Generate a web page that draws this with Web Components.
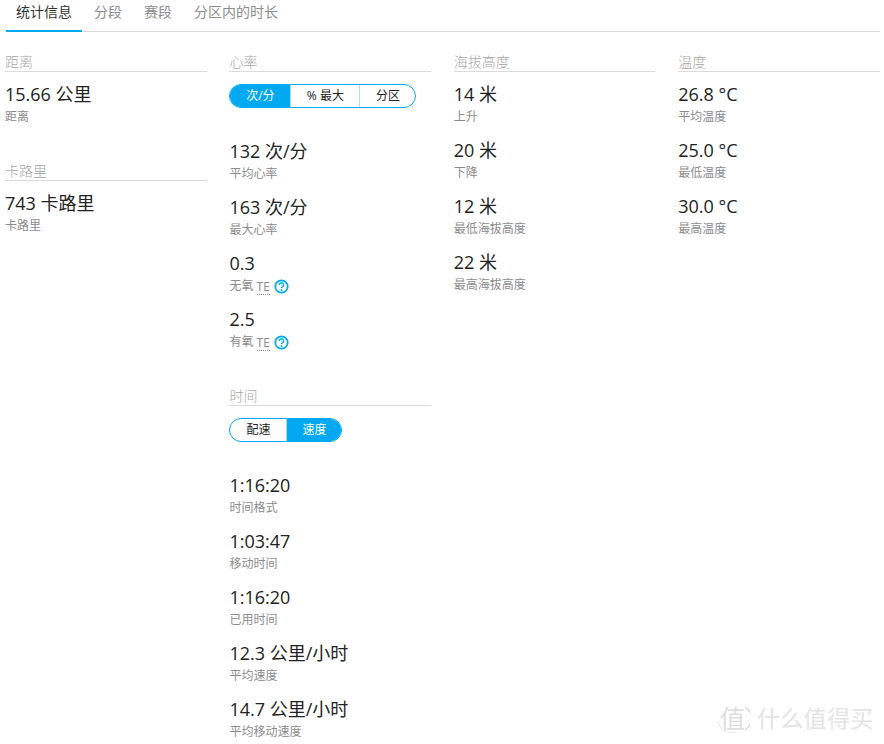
<!DOCTYPE html>
<html lang="zh">
<head>
<meta charset="utf-8">
<title>统计信息</title>
<style>
  html, body { margin: 0; padding: 0; background: #fff; height: 744px; overflow: hidden; }
  body { font-family: "Open Sans", "Noto Sans CJK SC", sans-serif; color: #222; }
</style>
</head>
<body>
<activity-page>
  <tab-bar slot="tabs" items="统计信息,分段,赛段,分区内的时长"></tab-bar>

  <stat-column>
    <stat-section heading="距离">
      <stat-item value="15.66 公里">距离</stat-item>
    </stat-section>
    <stat-section heading="卡路里">
      <stat-item value="743 卡路里">卡路里</stat-item>
    </stat-section>
  </stat-column>

  <stat-column>
    <stat-section heading="心率">
      <seg-toggle items="次/分:60,% 最大:69,分区:56" active="0"></seg-toggle>
      <stat-item value="132 次/分">平均心率</stat-item>
      <stat-item value="163 次/分">最大心率</stat-item>
      <stat-item value="0.3">无氧 <te-hint></te-hint></stat-item>
      <stat-item value="2.5">有氧 <te-hint></te-hint></stat-item>
    </stat-section>
    <stat-section heading="时间">
      <seg-toggle items="配速:56,速度:55" active="1"></seg-toggle>
      <stat-item value="1:16:20">时间格式</stat-item>
      <stat-item value="1:03:47">移动时间</stat-item>
      <stat-item value="1:16:20">已用时间</stat-item>
      <stat-item value="12.3 公里/小时">平均速度</stat-item>
      <stat-item value="14.7 公里/小时">平均移动速度</stat-item>
    </stat-section>
  </stat-column>

  <stat-column>
    <stat-section heading="海拔高度">
      <stat-item value="14 米">上升</stat-item>
      <stat-item value="20 米">下降</stat-item>
      <stat-item value="12 米">最低海拔高度</stat-item>
      <stat-item value="22 米">最高海拔高度</stat-item>
    </stat-section>
  </stat-column>

  <stat-column>
    <stat-section heading="温度">
      <stat-item value="26.8 °C">平均温度</stat-item>
      <stat-item value="25.0 °C">最低温度</stat-item>
      <stat-item value="30.0 °C">最高温度</stat-item>
    </stat-section>
  </stat-column>

  <site-watermark slot="overlay"></site-watermark>
</activity-page>

<script>
(function () {
  'use strict';

  const BLUE = '#03a9f0';

  class ActivityPage extends HTMLElement {
    constructor() {
      super();
      this.attachShadow({ mode: 'open' }).innerHTML = `
      <style>
        :host { display: block; position: relative; width: 884px; height: 744px; overflow: hidden; }
        .grid {
          display: grid;
          grid-template-columns: repeat(4, 201.6px);
          column-gap: 22.8px;
          padding: 20px 0 0 5px;
        }
      </style>
      <slot name="tabs"></slot>
      <div class="grid"><slot></slot></div>
      <slot name="overlay"></slot>
    `;
    }
  }

  class TabBar extends HTMLElement {
    constructor() {
      super();
      this.attachShadow({ mode: 'open' });
    }

    connectedCallback() {
      const items = (this.getAttribute('items') || '').split(',');
      const tabs = items
        .map((name, i) => `<div class="tab${i === 0 ? ' on' : ''}">${name}</div>`)
        .join('');

      this.shadowRoot.innerHTML = `
      <style>
        :host { display: block; margin: 0 4px 0 6px; }
        .bar { display: flex; gap: 2px; height: 32px; box-sizing: border-box; border-bottom: 1px solid #dadada; }
        .tab { padding: 0 10px; height: 32px; box-sizing: border-box; line-height: 24px; font-size: 14px; color: #8c8c8c; }
        .on { color: #333; border-bottom: 2px solid ${BLUE}; }
      </style>
      <div class="bar">${tabs}</div>
    `;
    }
  }

  class StatColumn extends HTMLElement {
    constructor() {
      super();
      this.attachShadow({ mode: 'open' }).innerHTML = `
      <style>
        :host { display: flex; flex-direction: column; gap: 35px; }
      </style>
      <slot></slot>
    `;
    }
  }

  class StatSection extends HTMLElement {
    constructor() {
      super();
      this.attachShadow({ mode: 'open' });
    }

    connectedCallback() {
      this.shadowRoot.innerHTML = `
      <style>
        :host { display: block; }
        h3 {
          margin: 0 0 10px;
          height: 20px;
          box-sizing: border-box;
          border-bottom: 1px solid #dadada;
          font-size: 14px;
          font-weight: 300;
          line-height: 19px;
          color: #a6a6a6;
        }
        .body { display: flex; flex-direction: column; gap: 12px; }
      </style>
      <h3>${this.getAttribute('heading') || ''}</h3>
      <div class="body"><slot></slot></div>
    `;
    }
  }

  class StatItem extends HTMLElement {
    constructor() {
      super();
      this.attachShadow({ mode: 'open' });
    }

    connectedCallback() {
      this.shadowRoot.innerHTML = `
      <style>
        :host { display: block; height: 44px; }
        .value { font-size: 18px; line-height: 24px; color: #222; white-space: nowrap; }
        .label { margin-top: 2px; font-size: 12px; line-height: 18px; color: #8c8c8c; white-space: nowrap; }
      </style>
      <div class="value">${this.getAttribute('value') || ''}</div>
      <div class="label"><slot></slot></div>
    `;
    }
  }

  class SegToggle extends HTMLElement {
    constructor() {
      super();
      this.attachShadow({ mode: 'open' });
    }

    connectedCallback() {
      const active = Number(this.getAttribute('active') || 0);
      const segs = (this.getAttribute('items') || '')
        .split(',')
        .map((item, i) => {
          const [name, width] = item.split(':');
          return `<div class="seg${i === active ? ' on' : ''}" style="width:${width}px">${name}</div>`;
        })
        .join('');

      this.shadowRoot.innerHTML = `
      <style>
        :host { display: block; height: 24px; margin: 1px 0 20px; }
        .wrap {
          display: inline-flex;
          height: 24px;
          box-sizing: border-box;
          border: 1px solid ${BLUE};
          border-radius: 12px;
          overflow: hidden;
        }
        .seg {
          box-sizing: border-box;
          text-align: center;
          font-size: 12px;
          line-height: 21px;
          color: #222;
          border-left: 1px solid #a8def7;
        }
        .seg:first-child { border-left: 0; }
        .on { background: ${BLUE}; color: #fff; }
      </style>
      <div class="wrap">${segs}</div>
    `;
    }
  }

  class TeHint extends HTMLElement {
    constructor() {
      super();
      this.attachShadow({ mode: 'open' }).innerHTML = `
      <style>
        :host { display: inline-flex; align-items: center; gap: 4px; vertical-align: top; height: 18px; }
        .te { border-bottom: 1px dotted #888; line-height: 15px; height: 15px; margin-top: 1px; }
        svg { display: block; width: 15px; height: 15px; }
      </style>
      <span class="te">TE</span>
      <svg viewBox="0 0 15 15" aria-hidden="true">
        <circle cx="7.5" cy="7.5" r="6.2" fill="none" stroke="${BLUE}" stroke-width="1.8"/>
        <path d="M5.4 5.9a2.1 2.1 0 1 1 3.3 1.7c-.8.5-1.2.9-1.2 1.7" fill="none" stroke="${BLUE}" stroke-width="1.4"/>
        <circle cx="7.5" cy="11" r=".9" fill="${BLUE}"/>
      </svg>
    `;
    }
  }

  class SiteWatermark extends HTMLElement {
    constructor() {
      super();
      this.attachShadow({ mode: 'open' }).innerHTML = `
      <style>
        :host {
          position: absolute;
          left: 717px;
          top: 704px;
          display: flex;
          align-items: center;
          gap: 7px;
          color: #e4e4e4;
        }
        .badge {
          position: relative;
          box-sizing: border-box;
          width: 33px;
          height: 29px;
          padding-left: 3px;
          font-size: 25px;
          line-height: 28px;
          color: #dedede;
        }
        .badge svg { position: absolute; left: 0; top: 0; }
        .name { font-size: 23px; line-height: 29px; letter-spacing: .3px; white-space: nowrap; }
      </style>
      <div class="badge">
        <svg width="33" height="29" viewBox="0 0 33 29" aria-hidden="true">
          <path d="M1 17a14 13 0 0 0 18 11" fill="none" stroke="#e6e6e6" stroke-width="1"/>
          <path d="M28 3a15 14 0 0 1 0 23" fill="none" stroke="#d6d6d6" stroke-width="1.3"/>
        </svg>
        值
      </div>
      <div class="name">什么值得买</div>
    `;
    }
  }

  customElements.define('activity-page', ActivityPage);
  customElements.define('tab-bar', TabBar);
  customElements.define('stat-column', StatColumn);
  customElements.define('stat-section', StatSection);
  customElements.define('stat-item', StatItem);
  customElements.define('seg-toggle', SegToggle);
  customElements.define('te-hint', TeHint);
  customElements.define('site-watermark', SiteWatermark);
})();
</script>
</body>
</html>
